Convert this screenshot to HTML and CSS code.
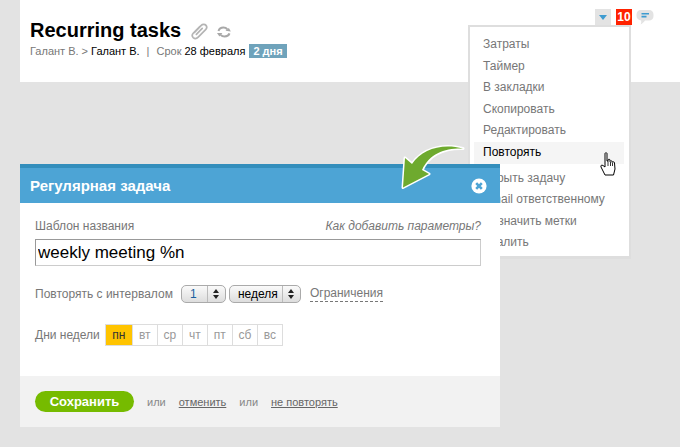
FILE: index.html
```html
<!DOCTYPE html>
<html lang="ru">
<head>
    <meta charset="UTF-8">
    <title>Recurring tasks</title>
    <link rel="stylesheet" href="styles.css">
</head>
<body>
    <div class="task-head">
        <div class="title-row">
            <h1>Recurring tasks</h1>
            <svg class="clip-icon" width="18" height="18" viewBox="0 0 18 18"><path d="M4.5 10.5 L11 3.6 C12.6 2 15 2.2 16 3.4 C17 4.6 16.8 6.4 15.6 7.7 L8.2 15.2 C6.8 16.6 4.6 16.8 3.2 15.6 C2 14.4 2.1 12.4 3.4 11 L10 4.4 M6.4 12.4 L12.2 6.4" fill="none" stroke="#b4b4b4" stroke-width="1.7" stroke-linecap="round"/></svg>
            <svg class="sync-icon" width="16" height="12" viewBox="0 0 16 12"><path d="M2.5 5 C3.2 2.8 5 1.6 7.4 1.6 C9 1.6 10.4 2.2 11.3 3.4" fill="none" stroke="#a8a8a8" stroke-width="2"/><path d="M9.6 5 L15 5 L12.6 1.8 Z" fill="#a8a8a8" transform="rotate(8 12 4)"/><path d="M13.5 7.4 C12.8 9.4 11 10.5 8.6 10.5 C7 10.5 5.6 9.9 4.7 8.8" fill="none" stroke="#a8a8a8" stroke-width="2"/><path d="M1 7 L6.4 7 L3.4 10.4 Z" fill="#a8a8a8"/></svg>
        </div>
        <div class="meta-row">
            <span>Галант В. &gt;</span> <b class="dark">Галант В.</b>
            <span class="sep">|</span>
            <span>Срок</span> <b class="dark">28 февраля</b>
            <span class="days-badge">2 дня</span>
        </div>
        <div class="head-tools">
            <span class="menu-toggle"><i class="arrow-down"></i></span>
            <span class="count-badge">10</span>
            <svg class="chat-icon" width="18" height="17" viewBox="0 0 18 17"><path d="M5 1 H13 C15.8 1 17.5 2.8 17.5 5.5 V7 C17.5 9.8 15.8 11.5 13 11.5 H9 C7.8 13.2 6.4 14.6 4.6 15.6 C5.2 14.2 5.4 12.9 5.2 11.4 C2.5 11.2 .5 9.6 .5 7 V5.5 C.5 2.8 2.2 1 5 1 Z" fill="#e3e3e3"/><path d="M5.5 4.8 H13 M5.5 7.6 H10.5" stroke="#3d9bd0" stroke-width="1.6"/></svg>
        </div>
    </div>

    <ul class="task-menu">
        <li>Затраты</li>
        <li>Таймер</li>
        <li>В закладки</li>
        <li>Скопировать</li>
        <li>Редактировать</li>
        <li class="active">Повторять</li>
        <li class="after-gap">Скрыть задачу</li>
        <li>Email ответственному</li>
        <li>Назначить метки</li>
        <li>Удалить</li>
    </ul>

    <div class="dialog">
        <div class="dialog-head">
            <span>Регулярная задача</span>
            <svg class="close-icon" width="16" height="16" viewBox="0 0 16 16"><circle cx="8" cy="8" r="7.6" fill="#fff"/><path d="M5.2 5.2 L10.8 10.8 M10.8 5.2 L5.2 10.8" stroke="#4da4d5" stroke-width="2.6"/></svg>
        </div>
        <div class="dialog-body">
            <div class="label-row">
                <label for="tpl">Шаблон названия</label>
                <a class="help-link">Как добавить параметры?</a>
            </div>
            <input class="name-input" id="tpl" type="text" value="weekly meeting %n">
            <div class="interval-row">
                <span class="field-name">Повторять с интервалом</span>
                <span class="fake-select num"><span class="val">1</span><i class="updown"></i></span>
                <span class="fake-select unit"><span class="val">неделя</span><i class="updown"></i></span>
                <a class="dashed-link">Ограничения</a>
            </div>
            <div class="days-row">
                <span class="field-name">Дни недели</span>
                <div class="days">
                    <span class="day on">пн</span>
                    <span class="day">вт</span>
                    <span class="day">ср</span>
                    <span class="day">чт</span>
                    <span class="day">пт</span>
                    <span class="day">сб</span>
                    <span class="day">вс</span>
                </div>
            </div>
        </div>
        <div class="dialog-foot">
            <button class="save-btn">Сохранить</button>
            <span class="or">или</span>
            <a class="foot-link">отменить</a>
            <span class="or">или</span>
            <a class="foot-link">не повторять</a>
        </div>
    </div>

    <!-- стрелка к пункту меню -->
    <svg class="hint-arrow" width="70" height="50" viewBox="0 0 70 50">
        <path id="arrow" d="M63 4.500 C45 4 30 9 22 26 L29 30 L3 43.500 L5 14 L12 20 C22 5 42 -1 63 4.500 Z" fill="#6eaa2e" stroke="#fff" stroke-width="3" stroke-linejoin="round" paint-order="stroke"/>
    </svg>

    <!-- курсор -->
    <svg class="hand-cursor" width="18" height="24" viewBox="0 0 18 24"><path d="M5 1.500 C5 .5 7 .5 7 1.500 V9 L8 9 V8 C8 7 10 7 10 8 V9.500 C10.500 8.500 12 8.500 12 9.500 V10.500 C12.500 9.500 14.500 9.500 14.500 11 L15 17 L13.500 23 H5 L1 15 C.5 13.500 1.500 12.500 3 13.500 L5 15 Z" fill="#fff" stroke="#000" stroke-width="1"/><path d="M8 9 V14 M10.500 10 V14 M12.500 11 V14" stroke="#000" stroke-width=".8"/></svg>
</body>
</html>
```
FILE: styles.css
```css
html, body {
    height: 100%;
}
body {
    margin: 0;
    background-color: #e3e3e3;
    font-family: "Liberation Sans", Arial, sans-serif;
    font-size: 12px;
    color: #777;
    overflow: hidden;
}
.task-head {
    position: relative;
    height: 82px;
    margin-left: 20px;
    padding: 20px 0 0 10px;
    box-sizing: border-box;
    background-color: white;
}
.title-row {
    display: flex;
    align-items: center;
    height: 20px;
}
h1 {
    margin: 0;
    font-size: 20px;
    line-height: 20px;
    color: #000;
}
.clip-icon {
    margin-left: 9px;
    margin-top: 2px;
}
.sync-icon {
    margin-left: 8px;
    margin-top: 3px;
}
.meta-row {
    display: flex;
    align-items: center;
    gap: 3px;
    height: 14px;
    margin-top: 4px;
    font-size: 11px;
}
.dark {
    font-weight: normal;
    color: #000;
}
.sep {
    margin: 0 4px;
}
.days-badge {
    margin-left: 1px;
    padding: 0 4px;
    line-height: 14px;
    font-weight: bold;
    color: white;
    background-color: #6fa3bb;
}
.head-tools {
    position: absolute;
    top: 9px;
    left: 575px;
    display: flex;
    align-items: flex-start;
}
.menu-toggle {
    display: flex;
    align-items: center;
    justify-content: center;
    width: 16px;
    height: 16px;
    background-color: #e3e3e3;
}
.arrow-down {
    width: 0;
    height: 0;
    border-left: 4.5px solid transparent;
    border-right: 4.5px solid transparent;
    border-top: 5px solid #3d9bd0;
}
.count-badge {
    width: 16px;
    height: 16px;
    margin-left: 5px;
    font-size: 12px;
    line-height: 16px;
    font-weight: bold;
    text-align: center;
    color: white;
    background-color: #ff2200;
}
.chat-icon {
    margin-left: 4px;
}
.task-menu {
    position: absolute;
    top: 25px;
    left: 468px;
    width: 163px;
    height: 234px;
    box-sizing: border-box;
    margin: 0;
    padding: 7px 5px 0 4px;
    list-style: none;
    background-color: white;
    border: 2px solid #dedede;
    border-bottom-width: 3px;
}
.task-menu li {
    height: 21.6px;
    padding-left: 9px;
    line-height: 21.6px;
}
.task-menu .active {
    color: #000;
    background-color: #f5f5f5;
}
.task-menu .after-gap {
    margin-top: 4px;
}
.dialog {
    position: absolute;
    top: 164px;
    left: 20px;
    width: 480px;
    height: 263px;
    display: flex;
    flex-direction: column;
    background-color: white;
}
.dialog-head {
    display: flex;
    align-items: center;
    justify-content: space-between;
    height: 39px;
    box-sizing: border-box;
    padding: 0 13px 0 10px;
    border-top: 4px solid #338ebc;
    background-color: #4da4d5;
    font-size: 15px;
    font-weight: bold;
    color: white;
}
.dialog-body {
    flex: 1;
    padding: 15px 19px 0 15px;
}
.label-row {
    display: flex;
    justify-content: space-between;
    line-height: 16px;
}
.help-link {
    font-style: italic;
}
.name-input {
    display: block;
    width: 100%;
    height: 27px;
    box-sizing: border-box;
    margin-top: 5px;
    padding: 0 2px;
    font-family: inherit;
    font-size: 17px;
    color: #000;
    border: 1px solid #ccc;
    border-top-color: #999;
    border-left-color: #999;
    outline: none;
}
.interval-row {
    display: flex;
    align-items: center;
    height: 20px;
    margin-top: 18px;
}
.field-name {
    margin-right: 8px;
}
.fake-select {
    display: flex;
    align-items: center;
    height: 18px;
    box-sizing: border-box;
    margin-right: 3px;
    border: 1px solid #aaa;
    border-radius: 5px;
    color: #000;
    font-size: 12px;
    background-image: linear-gradient(#fafafa, #ddd);
}
.fake-select.num {
    width: 45px;
}
.fake-select.unit {
    width: 72px;
}
.fake-select .val {
    flex: 1;
    padding-left: 8px;
}
.fake-select.num .val {
    color: #1a5fa0;
}
.updown {
    position: relative;
    width: 17px;
    height: 16px;
    border-left: 1px solid #bbb;
}
.updown::before, .updown::after {
    content: "";
    position: absolute;
    left: 5px;
    border-left: 3px solid transparent;
    border-right: 3px solid transparent;
}
.updown::before {
    top: 3px;
    border-bottom: 4px solid #222;
}
.updown::after {
    top: 9px;
    border-top: 4px solid #222;
}
.dashed-link {
    margin-left: 6px;
    line-height: 15px;
    border-bottom: 1px dashed #777;
}
.days-row {
    display: flex;
    align-items: center;
    margin-top: 20px;
}
.days-row .field-name {
    margin-right: 5px;
}
.days {
    display: flex;
    border: 1px solid #ddd;
}
.day {
    width: 24px;
    height: 20px;
    line-height: 20px;
    text-align: center;
    color: #999;
    border-left: 1px solid #ddd;
}
.day:first-child {
    border-left: none;
}
.day.on {
    width: 26px;
    color: #333;
    background-color: #ffc400;
}
.dialog-foot {
    display: flex;
    align-items: center;
    height: 51px;
    box-sizing: border-box;
    padding: 0 0 0 15px;
    background-color: #f2f2f2;
    font-size: 11px;
}
.save-btn {
    width: 99px;
    height: 21px;
    padding: 0;
    border: none;
    border-radius: 11px;
    background-color: #76bb00;
    color: white;
    font-family: inherit;
    font-size: 13px;
    font-weight: bold;
    cursor: pointer;
}
.or {
    margin: 0 13px;
    color: #888;
}
.foot-link {
    color: #666;
    text-decoration: underline;
}
.hint-arrow {
    position: absolute;
    top: 144px;
    left: 400px;
}
.hand-cursor {
    position: absolute;
    top: 152px;
    left: 600px;
}
```
